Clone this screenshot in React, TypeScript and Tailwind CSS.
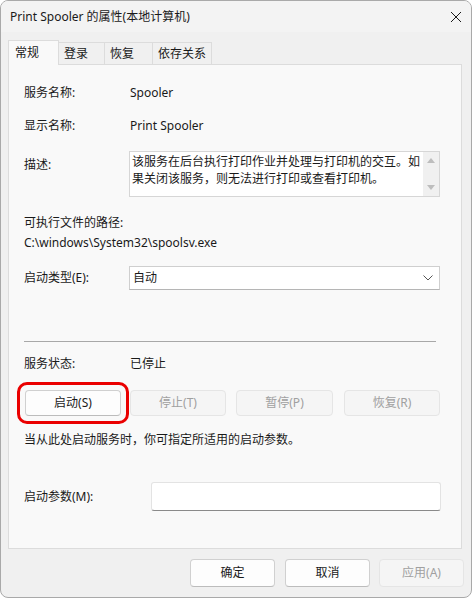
import React from 'react';

const FONT = { fontFamily: '"Noto Sans", "Noto Sans CJK SC", sans-serif' };

const tabs = ['常规', '登录', '恢复', '依存关系'];

function PushButton({
  label,
  disabled,
  className = '',
}: {
  label: string;
  disabled?: boolean;
  className?: string;
}) {
  return (
    <div
      className={
        'flex items-center justify-center rounded-[4px] border text-[12px] ' +
        (disabled
          ? 'border-[#e5e5e5] bg-[#f5f5f5] text-[#a0a0a0]'
          : 'border-[#d0d0d0] border-b-[#bcbcbc] bg-[#fdfdfd] text-[#1a1a1a]') +
        ' ' +
        className
      }
    >
      {label}
    </div>
  );
}

export default function App() {
  return (
    <div className="w-[472px] h-[598px] bg-white text-[#1a1a1a]" style={FONT}>
      <div className="flex h-full flex-col overflow-hidden rounded-[8px] border border-[#a9a9a9] bg-[#f0f0f0]">
        {/* title bar */}
        <div className="flex h-[31px] shrink-0 items-center justify-between bg-[#f3f3f3] pl-[9px] pr-[8px]">
          <span className="text-[12px]">Print Spooler 的属性(本地计算机)</span>
          <svg width="12" height="12" viewBox="0 0 12 12" className="mr-[1px]">
            <path d="M1 1 L11 11 M11 1 L1 11" stroke="#1a1a1a" strokeWidth="1" />
          </svg>
        </div>

        {/* body */}
        <div className="flex flex-1 flex-col pl-[7px] pr-[9px] pt-[8px]">
          {/* tabs */}
          <div className="relative z-10 flex h-[24px] items-end">
            {tabs.map((t, i) =>
              i === 0 ? (
                <div
                  key={t}
                  className="-mb-px flex h-[25px] w-[51px] items-start border border-b-0 border-[#dcdcdc] bg-[#f9f9f9] pl-[6px] pt-[3px] text-[12px]"
                >
                  {t}
                </div>
              ) : (
                <div
                  key={t}
                  className="flex h-[22px] items-center border border-l-0 border-b-0 border-[#dcdcdc] bg-[#f0f0f0] px-[5px] text-[12px]"
                  style={{ width: [0, 46, 48, 59][i] }}
                >
                  {t}
                </div>
              ),
            )}
          </div>

          {/* panel */}
          <div className="flex h-[485px] w-[454px] flex-col border border-[#dcdcdc] bg-[#f9f9f9] pl-[15px] text-[12px]">
            <div className="mt-[18px] flex h-[20px] items-center">
              <span className="w-[106px]">服务名称:</span>
              <span>Spooler</span>
            </div>
            <div className="mt-[13px] flex h-[20px] items-center">
              <span className="w-[106px]">显示名称:</span>
              <span>Print Spooler</span>
            </div>

            <div className="mt-[15px] flex">
              <span className="w-[105px] pt-[5px]">描述:</span>
              <div className="flex h-[46px] w-[311px] border border-[#d6d6d6] bg-white">
                <div className="flex-1 pl-[2px] pt-[1px] leading-[17px]">
                  该服务在后台执行打印作业并处理与打印机的交互。如果关闭该服务，则无法进行打印或查看打印机。
                </div>
                <div className="flex w-[16px] flex-col items-center justify-between bg-[#f0f0f0] py-[6px]">
                  <svg width="8" height="5" viewBox="0 0 8 5">
                    <path d="M0 5 L4 0 L8 5 Z" fill="#bdbdbd" />
                  </svg>
                  <svg width="8" height="5" viewBox="0 0 8 5">
                    <path d="M0 0 L8 0 L4 5 Z" fill="#bdbdbd" />
                  </svg>
                </div>
              </div>
            </div>

            <div className="mt-[16px] flex h-[20px] items-center">可执行文件的路径:</div>
            <div className="flex h-[20px] items-center">C:\windows\System32\spoolsv.exe</div>

            <div className="mt-[13px] flex items-center">
              <span className="w-[105px]">启动类型(E):</span>
              <div className="flex h-[24px] w-[311px] items-center justify-between border border-[#cfcfcf] border-b-[#b5b5b5] bg-white pl-[3px] pr-[6px]">
                <span>自动</span>
                <svg width="10" height="6" viewBox="0 0 10 6">
                  <path d="M0.5 0.5 L5 5 L9.5 0.5" fill="none" stroke="#555" strokeWidth="1" />
                </svg>
              </div>
            </div>

            <div className="mt-[51px] h-px w-[412px] bg-[#a8a8a8]" />

            <div className="mt-[12px] flex h-[20px] items-center">
              <span className="w-[106px]">服务状态:</span>
              <span>已停止</span>
            </div>

            <div className="mt-[16px] flex h-[26px] pl-[1px]">
              <div className="relative">
                <PushButton label="启动(S)" className="h-[26px] w-[96px]" />
                <div className="pointer-events-none absolute -inset-[8px] rounded-[10px] border-[3px] border-[#ea0000]" />
              </div>
              <PushButton label="停止(T)" disabled className="ml-[9px] h-[26px] w-[96px]" />
              <PushButton label="暂停(P)" disabled className="ml-[10px] h-[26px] w-[97px]" />
              <PushButton label="恢复(R)" disabled className="ml-[11px] h-[26px] w-[96px]" />
            </div>

            <div className="mt-[14px] flex h-[20px] items-center">
              当从此处启动服务时，你可指定所适用的启动参数。
            </div>

            <div className="mt-[32px] flex items-center">
              <span className="w-[127px]">启动参数(M):</span>
              <div className="h-[29px] w-[290px] rounded-[3px] border border-[#e3e3e3] border-b-[#8a8a8a] bg-white" />
            </div>
          </div>

          {/* dialog buttons */}
          <div className="mt-[10px] flex justify-end pr-[-1px]">
            <PushButton label="确定" className="h-[28px] w-[85px]" />
            <PushButton label="取消" className="ml-[10px] h-[28px] w-[85px]" />
            <PushButton label="应用(A)" disabled className="ml-[9px] mr-[-2px] h-[28px] w-[85px]" />
          </div>
        </div>
      </div>
    </div>
  );
}
